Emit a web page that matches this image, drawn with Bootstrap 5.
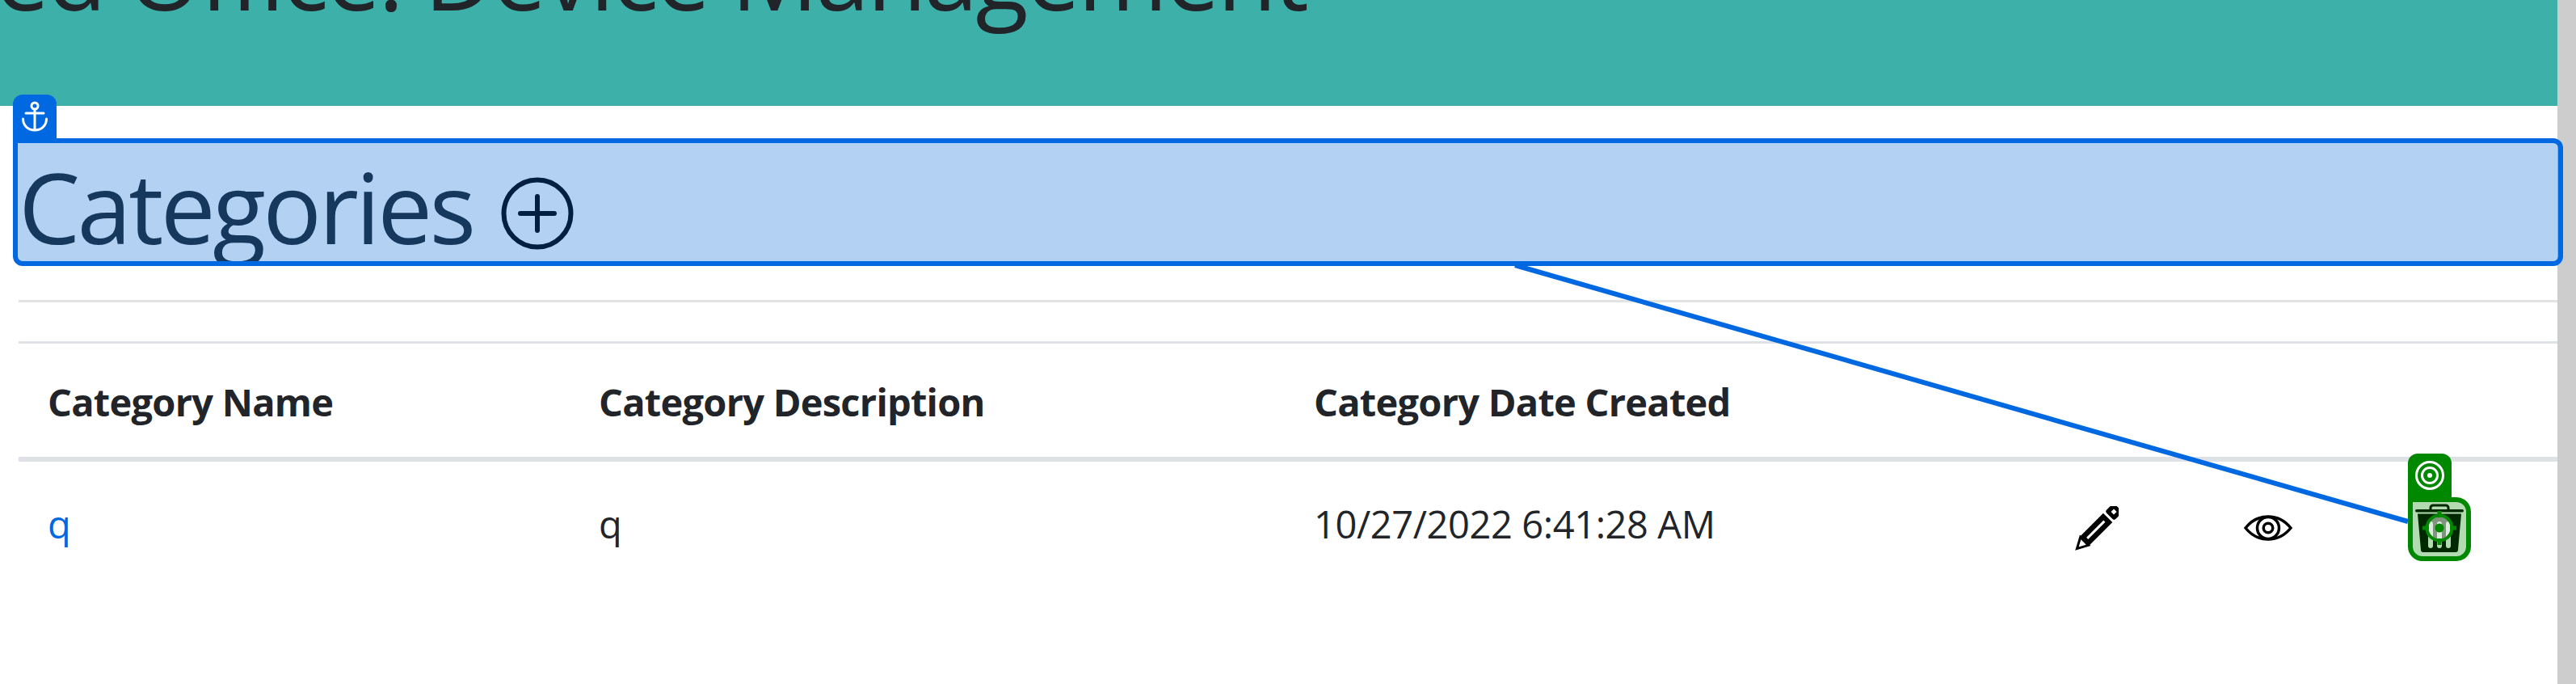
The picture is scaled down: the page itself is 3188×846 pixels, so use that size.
<!DOCTYPE html>
<html lang="en">
<head>
  <meta charset="UTF-8" />
  <title>Categories</title>
  <link href="https://cdn.jsdelivr.net/npm/bootstrap@5.3.3/dist/css/bootstrap.min.css" rel="stylesheet">
  <style>
    html, body {
      height: 846px;
      overflow: hidden;
      background: #fff;
    }
    body {
      font-family: "Open Sans", "Noto Sans", sans-serif;
      color: #212529;
      position: relative;
    }
    .page-main {
      width: 3165px;
    }
    .fake-scrollbar {
      width: 23px;
      height: 846px;
      background: #cdcdcd;
    }
    .top-band {
      height: 131px;
      background: #3db0a9;
      overflow: hidden;
    }
    .top-band h1 {
      font-size: 120px;
      font-weight: 400;
      line-height: 1;
      margin: -93px 0 0 -6px;
      letter-spacing: -3px;
      white-space: nowrap;
    }
    .content-area {
      padding: 40px 0 0 23px;
    }
    .cat-heading {
      height: 158px;
      overflow: hidden;
      font-size: 121px;
      font-weight: 400;
      line-height: 168px;
      margin: 0;
      letter-spacing: -3.6px;
    }
    .cat-heading svg {
      vertical-align: baseline;
      margin-left: 34px;
      margin-bottom: -7px;
    }
    .thin-rule {
      border: 0;
      height: 3px;
      background: #e2e3e4;
      opacity: 1;
      margin: 42px 0 48px;
    }
    .cat-table {
      table-layout: fixed;
      width: 3142px;
      margin: 0;
      font-size: 47px;
      border-top: 3px solid #dee2e6;
    }
    .cat-table th {
      height: 144px;
      padding: 5px 36px 0;
      vertical-align: middle;
      font-weight: 700;
      letter-spacing: -.75px;
      border-bottom: 6px solid #dee2e6;
      white-space: nowrap;
    }
    .cat-table td {
      height: 160px;
      padding: 0 36px 2px;
      vertical-align: middle;
      border: 0;
      letter-spacing: -.4px;
      white-space: nowrap;
    }
    .cat-table td svg {
      display: block;
      margin: 10px 0 0 1px;
    }
    .cat-table a {
      color: #0068e0;
      text-decoration: none;
    }
    .box-anchor {
      position: absolute;
      left: 16px;
      top: 171px;
      width: 3156px;
      height: 158px;
      border: 6px solid #0068e0;
      border-radius: 0 12px 12px 12px;
      background: rgba(0, 104, 215, .3);
    }
    .tag-anchor {
      position: absolute;
      left: 16px;
      top: 117px;
      width: 54px;
      height: 54px;
      background: #0068e0;
      border-radius: 12px 12px 0 0;
    }
    .box-target {
      position: absolute;
      left: 2980px;
      top: 615px;
      width: 78px;
      height: 79px;
      border: 6px solid #008800;
      border-radius: 0 18px 18px 18px;
      background: rgba(0, 136, 0, .3);
    }
    .tag-target {
      position: absolute;
      left: 2980px;
      top: 561px;
      width: 54px;
      height: 54px;
      background: #008800;
      border-radius: 12px 12px 0 0;
    }
    .wire {
      position: absolute;
      left: 0;
      top: 0;
    }
  </style>
</head>
<body>

<div class="d-flex">
  <div class="page-main">
    <div class="top-band">
      <h1>ed Office: Device Management</h1>
    </div>
    <div class="content-area">
      <h2 class="cat-heading">Categories<svg width="90" height="90" viewBox="0 0 90 90" fill="none" stroke="#000" stroke-width="6" stroke-linecap="round"><circle cx="45" cy="45" r="41.500"/><path d="M24 45h42M45 24v42"/></svg></h2>
      <hr class="thin-rule">
      <table class="table cat-table">
        <colgroup>
          <col width="682"><col width="885"><col width="941"><col width="209"><col width="212"><col width="213">
        </colgroup>
        <thead>
          <tr>
            <th>Category Name</th>
            <th>Category Description</th>
            <th>Category Date Created</th>
            <th></th>
            <th></th>
            <th></th>
          </tr>
        </thead>
        <tbody>
          <tr>
            <td><a href="#">q</a></td>
            <td>q</td>
            <td>10/27/2022 6:41:28 AM</td>
            <td>
              <svg width="54" height="55" viewBox="0 0 54 55">
                <g transform="translate(1 54) rotate(-45)">
                  <path fill="#fff" stroke="#000" stroke-width="3" stroke-linejoin="miter" d="M2 0L15 -7V7z"/>
                  <path fill="#000" d="M16 -8h40v16H16z"/>
                  <path fill="#fff" d="M20 -1.500h30v3H20z"/>
                  <rect x="59" y="-8" width="15" height="16" rx="3" fill="#000"/>
                  <rect x="64" y="-2.500" width="5" height="5" fill="#fff"/>
                </g>
              </svg>
            </td>
            <td>
              <svg width="60" height="32" viewBox="0 0 60 32" fill="none" stroke="#000">
                <path stroke-width="3.500" d="M2 16C10 6 19 2 30 2s20 4 28 14c-8 10-17 14-28 14S10 26 2 16z"/>
                <circle cx="30" cy="16" r="13.500" stroke-width="3.500"/>
                <circle cx="30" cy="16" r="5.750" stroke-width="3.500"/>
              </svg>
            </td>
            <td>
              <svg width="60" height="60" viewBox="0 0 60 60">
                <path fill="none" stroke="#000" stroke-width="3" d="M19 8V5a3 3 0 0 1 3-3h16a3 3 0 0 1 3 3v3"/>
                <rect x="0" y="7" width="60" height="3.500" rx="1.750" fill="#000"/>
                <path fill="#000" d="M3 12.500h54l-4 44.500a3 3 0 0 1-3 3H10a3 3 0 0 1-3-3z"/>
                <rect x="16" y="22" width="6" height="33" rx="3" fill="#fff"/>
                <rect x="27" y="22" width="6" height="33" rx="3" fill="#fff"/>
                <rect x="38" y="22" width="6" height="33" rx="3" fill="#fff"/>
              </svg>
            </td>
          </tr>
        </tbody>
      </table>
    </div>
  </div>
  <div class="fake-scrollbar"></div>
</div>

<!-- overlay drawn over the page -->
<div class="box-anchor"></div>
<div class="tag-anchor">
  <svg width="54" height="54" viewBox="0 0 54 54" fill="none" stroke="#fff" stroke-width="3">
    <circle cx="27" cy="14" r="4"/>
    <path d="M27 18v26M16 23h22M12.500 30c0 9 7 14 14.500 14s14.500-5 14.500-14" stroke-linecap="round"/>
  </svg>
</div>
<div class="box-target"></div>
<div class="tag-target">
  <svg width="54" height="54" viewBox="0 0 54 54" fill="none" stroke="#fff" stroke-width="3">
    <circle cx="27" cy="27" r="16.500"/>
    <circle cx="27" cy="27" r="9.500"/>
    <circle cx="27" cy="27" r="3" fill="#fff" stroke="none"/>
  </svg>
</div>
<svg class="wire" width="3188" height="846" viewBox="0 0 3188 846" fill="none">
  <path d="M1875 328L2980 645" stroke="#0068e0" stroke-width="6"/>
  <circle cx="3019" cy="653" r="15.500" fill="#fff" fill-opacity=".5" stroke="#008800" stroke-width="4"/>
  <circle cx="3019" cy="653" r="5.500" fill="#008800"/>
  <path d="M2998 653h8M3032 653h8M3019 632v8M3019 666v8" stroke="#008800" stroke-width="5"/>
</svg>

<script src="https://cdn.jsdelivr.net/npm/bootstrap@5.3.3/dist/js/bootstrap.bundle.min.js"></script>
</body>
</html>
